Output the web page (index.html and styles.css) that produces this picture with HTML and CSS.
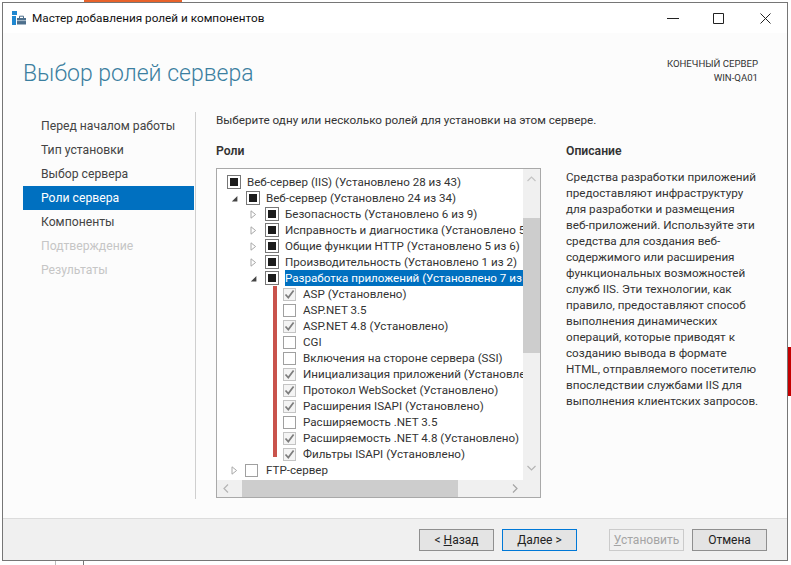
FILE: index.html
```html
<!DOCTYPE html>
<html lang="ru">
<head>
    <meta charset="UTF-8">
    <title>Мастер добавления ролей и компонентов</title>
    <link rel="stylesheet" href="styles.css">
</head>
<body>
    <svg class="defs" width="0" height="0">
        <symbol id="check" viewBox="0 0 13 13"><path d="M2.5 6.5 5.3 9.6 10.6 2.6" fill="none" stroke="#7d7d7d" stroke-width="1.7"/></symbol>
        <symbol id="closed" viewBox="0 0 7 9"><path d="M1 .8 5.6 4.5 1 8.2Z" fill="#fff" stroke="#a8a8a8"/></symbol>
        <symbol id="open" viewBox="0 0 7 9"><path d="M6.4 2V7.6H.8Z" fill="#444"/></symbol>
    </svg>

    <div class="desk-orange"></div>
    <div class="desk-red"></div>
    <div class="desk-line desk-line-a"></div>
    <div class="desk-line desk-line-b"></div>

    <div class="window">
        <div class="titlebar">
            <svg class="app-icon" width="15" height="15" viewBox="0 0 15 15">
                <path d="M0 0H5V4H0ZM0 5H4V14H0Z" fill="#1f87d0"/>
                <path d="M5 7H14V13.5H5Z" fill="#4d6f8c"/>
                <path d="M7.5 7V5.2H11.5V7" fill="none" stroke="#4d6f8c"/>
                <path d="M5 9.6H14" stroke="#c5d3de" stroke-width=".8"/>
            </svg>
            <span class="app-title">Мастер добавления ролей и компонентов</span>
            <div class="win-controls">
                <svg class="win-min" width="12" height="12" viewBox="0 0 12 12"><path d="M0 6.5H12" stroke="#222"/></svg>
                <svg class="win-max" width="11" height="11" viewBox="0 0 11 11"><path d="M.5 .5H10.5V10.5H.5Z" fill="none" stroke="#222"/></svg>
                <svg width="11" height="11" viewBox="0 0 11 11"><path d="M.5 .5 10.5 10.5M10.5 .5 .5 10.5" stroke="#222"/></svg>
            </div>
        </div>

        <div class="head">
            <h1>Выбор ролей сервера</h1>
            <div class="target">КОНЕЧНЫЙ СЕРВЕР<br>WIN-QA01</div>
        </div>

        <div class="main">
            <ul class="steps">
                <li>Перед началом работы</li>
                <li>Тип установки</li>
                <li>Выбор сервера</li>
                <li class="current">Роли сервера</li>
                <li>Компоненты</li>
                <li class="off">Подтверждение</li>
                <li class="off">Результаты</li>
            </ul>

            <div class="content">
                <p class="intro">Выберите одну или несколько ролей для установки на этом сервере.</p>
                <div class="columns">
                    <div class="roles">
                        <h2>Роли</h2>
                        <div class="treebox">
                            <div class="tree-area">
                                <div class="tree">
                                    <div class="row lvl0"><span class="twist"><svg width="7" height="9"><use href="#closed"/></svg></span><span class="box part"></span><span class="label">Веб-сервер (IIS) (Установлено 28 из 43)</span></div>
                                    <div class="row lvl1"><span class="twist"><svg width="7" height="9"><use href="#open"/></svg></span><span class="box part"></span><span class="label">Веб-сервер (Установлено 24 из 34)</span></div>
                                    <div class="row lvl2"><span class="twist"><svg width="7" height="9"><use href="#closed"/></svg></span><span class="box part"></span><span class="label">Безопасность (Установлено 6 из 9)</span></div>
                                    <div class="row lvl2"><span class="twist"><svg width="7" height="9"><use href="#closed"/></svg></span><span class="box part"></span><span class="label">Исправность и диагностика (Установлено 5 из 12)</span></div>
                                    <div class="row lvl2"><span class="twist"><svg width="7" height="9"><use href="#closed"/></svg></span><span class="box part"></span><span class="label">Общие функции HTTP (Установлено 5 из 6)</span></div>
                                    <div class="row lvl2"><span class="twist"><svg width="7" height="9"><use href="#closed"/></svg></span><span class="box part"></span><span class="label">Производительность (Установлено 1 из 2)</span></div>
                                    <div class="row lvl2"><span class="twist"><svg width="7" height="9"><use href="#open"/></svg></span><span class="box part"></span><span class="label selected">Разработка приложений (Установлено 7 из 11)</span></div>
                                    <div class="row lvl3"><span class="box done"><svg width="13" height="13"><use href="#check"/></svg></span><span class="label">ASP (Установлено)</span></div>
                                    <div class="row lvl3"><span class="box"></span><span class="label">ASP.NET 3.5</span></div>
                                    <div class="row lvl3"><span class="box done"><svg width="13" height="13"><use href="#check"/></svg></span><span class="label">ASP.NET 4.8 (Установлено)</span></div>
                                    <div class="row lvl3"><span class="box"></span><span class="label">CGI</span></div>
                                    <div class="row lvl3"><span class="box"></span><span class="label">Включения на стороне сервера (SSI)</span></div>
                                    <div class="row lvl3"><span class="box done"><svg width="13" height="13"><use href="#check"/></svg></span><span class="label">Инициализация приложений (Установлено)</span></div>
                                    <div class="row lvl3"><span class="box done"><svg width="13" height="13"><use href="#check"/></svg></span><span class="label">Протокол WebSocket (Установлено)</span></div>
                                    <div class="row lvl3"><span class="box done"><svg width="13" height="13"><use href="#check"/></svg></span><span class="label">Расширения ISAPI (Установлено)</span></div>
                                    <div class="row lvl3"><span class="box"></span><span class="label">Расширяемость .NET 3.5</span></div>
                                    <div class="row lvl3"><span class="box done"><svg width="13" height="13"><use href="#check"/></svg></span><span class="label">Расширяемость .NET 4.8 (Установлено)</span></div>
                                    <div class="row lvl3"><span class="box done"><svg width="13" height="13"><use href="#check"/></svg></span><span class="label">Фильтры ISAPI (Установлено)</span></div>
                                    <div class="row lvl1"><span class="twist"><svg width="7" height="9"><use href="#closed"/></svg></span><span class="box ftp"></span><span class="label">FTP-сервер</span></div>
                                </div>
                                <div class="red-mark"></div>
                                <div class="vscroll">
                                    <svg width="9" height="6" viewBox="0 0 9 6"><path d="M.5 5 4.5 1 8.5 5" fill="none" stroke="#c4c4c4" stroke-width="1.2"/></svg>
                                    <div class="vthumb"></div>
                                    <svg width="9" height="6" viewBox="0 0 9 6"><path d="M.5 1 4.5 5 8.5 1" fill="none" stroke="#b4b4b4" stroke-width="1.2"/></svg>
                                </div>
                            </div>
                            <div class="hscroll">
                                <svg width="6" height="9" viewBox="0 0 6 9"><path d="M5 .5 1 4.5 5 8.5" fill="none" stroke="#b4b4b4" stroke-width="1.2"/></svg>
                                <div class="hthumb"></div>
                                <svg width="6" height="9" viewBox="0 0 6 9"><path d="M1 .5 5 4.5 1 8.5" fill="none" stroke="#a4a4a4" stroke-width="1.2"/></svg>
                            </div>
                        </div>
                    </div>
                    <div class="about">
                        <h2>Описание</h2>
                        <p>Средства разработки приложений<br>предоставляют инфраструктуру<br>для разработки и размещения<br>веб-приложений. Используйте эти<br>средства для создания веб-<br>содержимого или расширения<br>функциональных возможностей<br>служб IIS. Эти технологии, как<br>правило, предоставляют способ<br>выполнения динамических<br>операций, которые приводят к<br>созданию вывода в формате<br>HTML, отправляемого посетителю<br>впоследствии службами IIS для<br>выполнения клиентских запросов.</p>
                    </div>
                </div>
            </div>
        </div>

        <div class="footer">
            <button class="btn"><span class="btn-arrow">&lt;</span> <u>Н</u>азад</button>
            <button class="btn default"><u>Д</u>алее <span class="btn-arrow">&gt;</span></button>
            <button class="btn disabled install"><u>У</u>становить</button>
            <button class="btn">Отмена</button>
        </div>
    </div>
</body>
</html>
```

FILE: styles.css
```css
* {
    box-sizing: border-box;
}

body {
    margin: 0;
    width: 791px;
    height: 565px;
    overflow: hidden;
    position: relative;
    background: #fff;
    font-family: Roboto, "Open Sans", sans-serif;
    font-size: 12px;
    color: #333;
}

.defs {
    position: absolute;
}

/* bits of the desktop that show around the window */
.desk-orange {
    position: absolute;
    left: 84px;
    top: 0;
    width: 98px;
    height: 2px;
    background: #e8622a;
}

.desk-red {
    position: absolute;
    left: 787px;
    top: 347px;
    width: 4px;
    height: 49px;
    background: #c40000;
}

.desk-line {
    position: absolute;
    top: 561px;
    width: 1px;
    height: 4px;
    background: #777;
}

.desk-line-a {
    left: 55px;
    background: #bbb;
}

.desk-line-b {
    left: 83px;
}

.window {
    position: relative;
    margin: 2px 0 0 2px;
    width: 786px;
    height: 559px;
    border: 1px solid #767676;
    background: #fcfcfc;
    display: flex;
    flex-direction: column;
}

.titlebar {
    height: 30px;
    flex: none;
    background: #fff;
    display: flex;
    align-items: center;
    padding-left: 9px;
    color: #111;
}

.app-icon {
    margin-right: 5px;
}

.app-title {
    font-size: 11.75px;
}

.win-controls {
    margin-left: auto;
    display: flex;
    align-items: center;
    padding-right: 16px;
}

.win-min {
    margin-right: 34px;
}

.win-max {
    margin-right: 36px;
}

.head {
    height: 78px;
    flex: none;
    display: flex;
    justify-content: space-between;
    padding: 24px 29px 0 20px;
}

h1 {
    margin: 1px 0 0;
    font-size: 23px;
    line-height: 32px;
    font-weight: 300;
    color: #3b7fa0;
}

.target {
    font-size: 9.6px;
    line-height: 14px;
    text-align: right;
    color: #333;
}

.main {
    flex: 1;
    display: flex;
}

.steps {
    list-style: none;
    margin: 1px 0 19px 0;
    padding: 2px 0 0 20px;
    width: 193px;
    border-right: 1px solid #cfcfcf;
    font-size: 12.2px;
    color: #444;
}

.steps li {
    height: 24px;
    line-height: 24px;
    margin-right: 1px;
    padding-left: 18px;
}

.steps .current {
    background: #0070c0;
    color: #fff;
}

.steps .off {
    color: #c6c6c6;
}

.content {
    flex: 1;
    padding: 1px 0 0 20px;
}

.intro {
    margin: 0 0 15px;
    line-height: 16px;
    font-size: 11.7px;
}

.columns {
    display: flex;
    gap: 25px;
}

h2 {
    margin: 0 0 9px;
    font-size: 12.2px;
    line-height: 16px;
    font-weight: 600;
}

.roles {
    width: 325px;
    flex: none;
}

.treebox {
    height: 330px;
    border: 1px solid #a9a9a9;
    background: #fff;
    display: flex;
    flex-direction: column;
}

.tree-area {
    flex: 1;
    display: flex;
    position: relative;
    min-height: 0;
}

.tree {
    flex: 1;
    min-width: 0;
    height: 306px;
    margin-top: 5px;
    overflow: hidden;
}

.row {
    display: flex;
    align-items: center;
    height: 16px;
    white-space: nowrap;
    font-size: 11.6px;
    color: #333;
}

.lvl1 {
    padding-left: 12px;
}

.lvl2 {
    padding-left: 31px;
}

.lvl3 {
    padding-left: 66px;
}

.twist {
    width: 17px;
    flex: none;
    display: flex;
    padding-left: 2px;
}

.lvl0 .twist {
    width: 10px;
    padding-left: 0;
    margin-left: -6px;
    margin-right: 6px;
}

.box {
    width: 13px;
    height: 13px;
    flex: none;
    border: 1px solid #a0a0a0;
    background: #fff;
    display: flex;
    margin-right: 7px;
}

.box svg {
    margin: -1px;
}

.box.part {
    width: 14px;
    height: 14px;
    margin-right: 6px;
    border-color: #777;
    padding: 2px;
}

.box.part::before {
    content: "";
    flex: 1;
    background: #1c1c1c;
}

.box.done {
    border-color: #c4c4c4;
    background: #f4f4f4;
}

.box.ftp {
    margin-left: -1px;
    margin-right: 8px;
}

.label {
    line-height: 16px;
}

.selected {
    flex: 1;
    background: #0070c0;
    color: #fff;
}

.red-mark {
    position: absolute;
    left: 56px;
    top: 117px;
    width: 4px;
    height: 171px;
    background: #c9534c;
}

.vscroll {
    width: 17px;
    flex: none;
    background: #f0f0f0;
    display: flex;
    flex-direction: column;
    align-items: center;
    padding-top: 7px;
}

.vthumb {
    width: 17px;
    height: 135px;
    margin: 36px 0 112px;
    background: #cdcdcd;
}

.hscroll {
    height: 17px;
    flex: none;
    background: #f0f0f0;
    display: flex;
    align-items: center;
    padding: 0 22px 0 6px;
}

.hthumb {
    width: 216px;
    height: 17px;
    margin: 0 auto 0 13px;
    background: #cdcdcd;
}

.about {
    flex: 1;
}

.about p {
    margin: 0;
    padding-top: 1px;
    line-height: 16px;
    font-size: 11.7px;
    white-space: nowrap;
}

.footer {
    height: 42px;
    flex: none;
    background: #f0f0f0;
    border-top: 1px solid #dcdcdc;
    display: flex;
    align-items: flex-start;
    padding: 10px 20px 0 0;
    justify-content: flex-end;
    gap: 8px;
}

.btn {
    width: 75px;
    height: 22px;
    padding: 0;
    border: 1px solid #8f8f8f;
    background: #e4e4e4;
    font: 12px Roboto, "Open Sans", sans-serif;
    color: #222;
}

.btn.default {
    border-color: #0078d7;
}

.btn.disabled {
    border-color: #cbcbcb;
    background: #f0f0f0;
    color: #a4a4a4;
}

.btn.install {
    margin-left: 24px;
}
```
